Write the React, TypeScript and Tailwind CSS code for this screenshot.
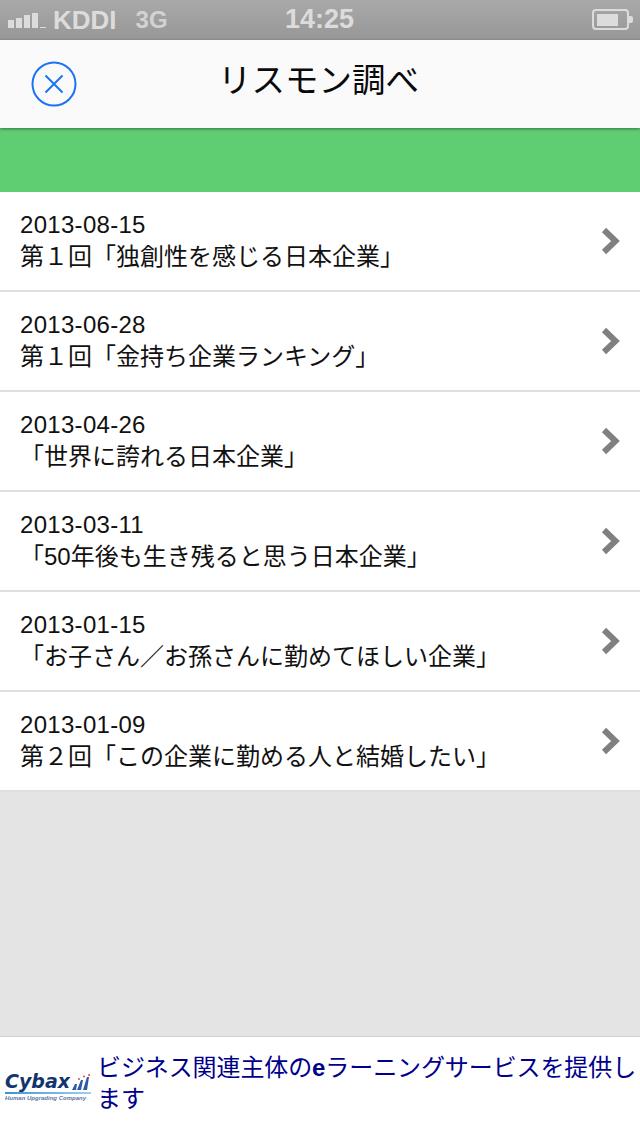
const font = "font-['Liberation_Sans','Noto_Sans_CJK_JP',sans-serif]";

const rows = [
  ["2013-08-15", "第１回「独創性を感じる日本企業」"],
  ["2013-06-28", "第１回「金持ち企業ランキング」"],
  ["2013-04-26", "「世界に誇れる日本企業」"],
  ["2013-03-11", "「50年後も生き残ると思う日本企業」"],
  ["2013-01-15", "「お子さん／お孫さんに勤めてほしい企業」"],
  ["2013-01-09", "第２回「この企業に勤める人と結婚したい」"],
];

function StatusBar() {
  return (
    <div className="relative flex h-10 shrink-0 items-center bg-gradient-to-b from-[#a9a9a9] to-[#979797] pl-2 pr-[6px] text-[#dcdcdc]">
      <svg width="39" height="20" viewBox="0 0 39 20" className="shrink-0" fill="#dcdcdc">
        <rect x="0" y="10" width="6" height="8" />
        <rect x="8" y="8" width="6" height="10" />
        <rect x="16" y="5" width="6" height="13" />
        <rect x="24" y="3" width="6" height="15" />
        <rect x="32" y="17" width="6" height="1" />
      </svg>
      <span className="ml-[6px] text-[26px] font-bold leading-none">KDDI</span>
      <span className="ml-[19px] text-[24px] font-bold leading-none text-[#d2d2d2]">3G</span>
      <span className="absolute left-[285px] top-[6px] text-[27px] font-bold leading-none">14:25</span>
      <svg width="42" height="22" viewBox="0 0 42 22" className="ml-auto shrink-0">
        <rect x="1" y="1" width="35" height="19" rx="3" fill="none" stroke="#dcdcdc" strokeWidth="2" />
        <rect x="5" y="5" width="21" height="12" fill="#dcdcdc" />
        <path d="M37 7h2a2 2 0 0 1 2 2v3a2 2 0 0 1-2 2h-2z" fill="#dcdcdc" />
      </svg>
    </div>
  );
}

function NavBar() {
  return (
    <div className="relative z-10 flex h-[88px] shrink-0 items-center justify-center bg-[#fafafa] pb-[6px] pr-[3px] shadow-[0_1px_3px_rgba(0,0,0,0.45)]">
      <svg width="46" height="46" viewBox="0 0 46 46" className="absolute left-[31px] top-[21px]" fill="none" stroke="#1a73f5">
        <circle cx="23" cy="23" r="21.5" strokeWidth="2" />
        <path d="M14.5 14.5 31.5 31.5M31.5 14.5 14.5 31.5" strokeWidth="2" />
      </svg>
      <span className="text-[33.5px] leading-none text-[#0a0a0a]">リスモン調べ</span>
    </div>
  );
}

function Row({ date, title }: { date: string; title: string }) {
  return (
    <div className="flex h-[100px] items-center border-b-2 border-[#dfdfdf] bg-white pl-5 pr-[19px]">
      <div className="min-w-0 flex-1 text-[24px] leading-[32px] text-[#111]">
        <div className="tracking-[0.3px]">{date}</div>
        <div className="whitespace-nowrap">{title}</div>
      </div>
      <svg width="20" height="28" viewBox="0 0 20 28" className="shrink-0" fill="none" stroke="#808080" strokeWidth="6">
        <path d="M3 3 14.5 14 3 25" />
      </svg>
    </div>
  );
}

function Logo() {
  return (
    <div className="flex h-[30px] w-[86px] shrink-0 flex-col">
      <div className="flex h-[19px] items-end justify-between">
        <span className="font-['DejaVu_Sans',sans-serif] text-[19px] font-bold italic leading-[19px] text-[#12356f]">Cybax</span>
        <svg width="20" height="17" viewBox="0 0 20 17" className="shrink-0">
          <path d="M1 16 4 10h2L5 16zM6 16 10 6h2L10 16zM12 16 16 3h2L16 16z" fill="#2a5aa8" />
          <circle cx="8" cy="5" r="1" fill="#e5484d" />
          <circle cx="13" cy="2.5" r="1" fill="#e5484d" />
          <circle cx="18" cy="1" r="1" fill="#e5484d" />
        </svg>
      </div>
      <div className="mt-px h-[3px] bg-gradient-to-r from-[#3b93d4] to-[#9fd0ee]" />
      <span className="mt-px whitespace-nowrap text-[6px] font-bold italic leading-[7px] text-[#5a76a3]">Human Upgrading Company</span>
    </div>
  );
}

function Footer() {
  return (
    <div className="flex h-[100px] shrink-0 items-center gap-[7px] border-t border-[#d0d0d0] bg-white pl-[5px]">
      <Logo />
      <div className="mb-[7px] ml-[-1px] text-[24px] leading-[31px] tracking-[-0.1px] text-[#00008b]">
        ビジネス関連主体の<b className="font-bold">e</b>ラーニングサービスを提供します
      </div>
    </div>
  );
}

export default function App() {
  return (
    <div className={`${font} flex h-[1136px] w-[640px] flex-col overflow-hidden bg-[#e4e4e4]`}>
      <StatusBar />
      <NavBar />
      <div className="h-[64px] shrink-0 bg-[#5fce73]" />
      <div className="flex-1">
        {rows.map(([d, t]) => (
          <Row key={d} date={d} title={t} />
        ))}
      </div>
      <Footer />
    </div>
  );
}
